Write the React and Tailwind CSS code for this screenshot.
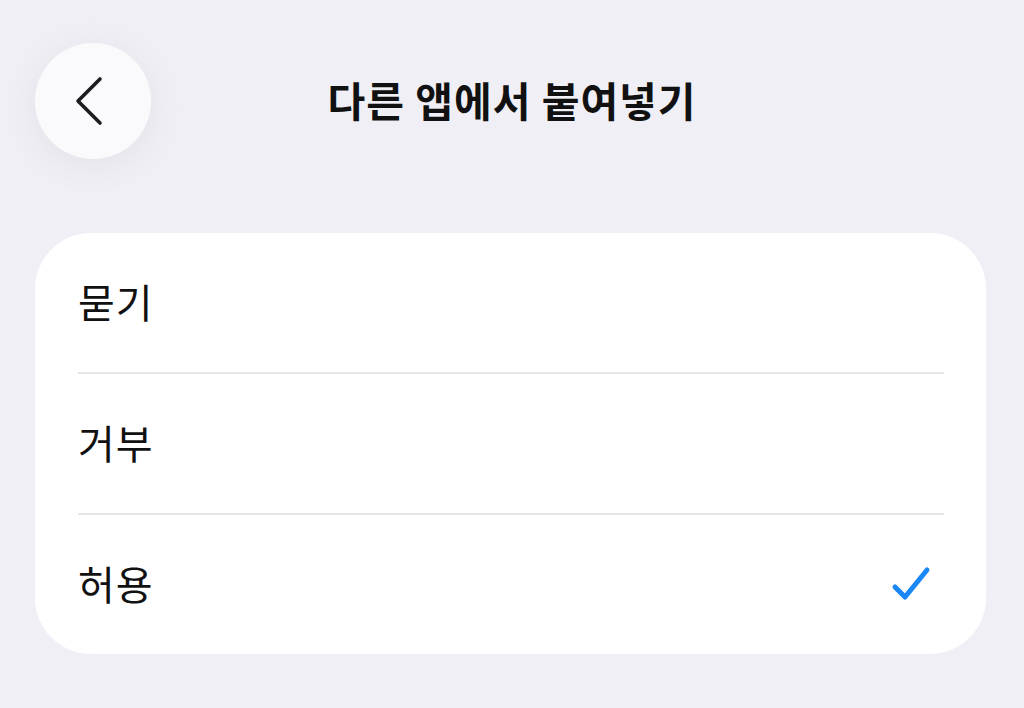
import React from 'react';

const FONT = { fontFamily: '"Noto Sans CJK KR", "Noto Sans", sans-serif' };

const options = [
  { id: 'ask', label: '묻기' },
  { id: 'deny', label: '거부' },
  { id: 'allow', label: '허용' },
];

function BackButton() {
  return (
    <button
      className="w-[116px] h-[116px] rounded-full bg-[#fafafd] flex items-center justify-center shadow-[0_6px_40px_rgba(0,0,0,0.06)]"
      aria-label="뒤로"
    >
      <svg width="40" height="52" viewBox="0 0 40 52" fill="none">
        <path d="M27 4L5 26L27 48" stroke="#1c1c1e" strokeWidth="3.6" strokeLinecap="round" strokeLinejoin="round" />
      </svg>
    </button>
  );
}

function CheckIcon() {
  return (
    <svg width="40" height="40" viewBox="0 0 40 40" fill="none">
      <path d="M4 22L14 32L36 5" stroke="#1a87f7" strokeWidth="5" strokeLinecap="round" strokeLinejoin="round" />
    </svg>
  );
}

export default function App() {
  const selected = 'allow';

  return (
    <div className="w-[1024px] h-[708px] bg-[#f0eff5] overflow-hidden" style={FONT}>
      {/* Header */}
      <div className="relative h-[202px] pt-[43px] px-[35px]">
        <BackButton />
        <h1 className="absolute left-0 right-0 top-[68px] text-center text-[41px] font-bold tracking-[1px] text-[#111] leading-[62px]">
          다른 앱에서 붙여넣기
        </h1>
      </div>

      {/* Options card */}
      <div className="mx-[35px] mt-[31px] w-[951px] bg-white rounded-[56px] overflow-hidden">
        {options.map((opt, i) => (
          <div key={opt.id}>
            {i > 0 && <div className="ml-[43px] mr-[42px] h-[2px] bg-[#e6e6ea]" />}
            <div className="h-[139px] pl-[43px] pr-[55px] flex items-center justify-between">
              <span className="text-[40px] text-[#111] leading-none tracking-[1px] pb-[4px]">{opt.label}</span>
              {selected === opt.id && <CheckIcon />}
            </div>
          </div>
        ))}
      </div>
    </div>
  );
}
